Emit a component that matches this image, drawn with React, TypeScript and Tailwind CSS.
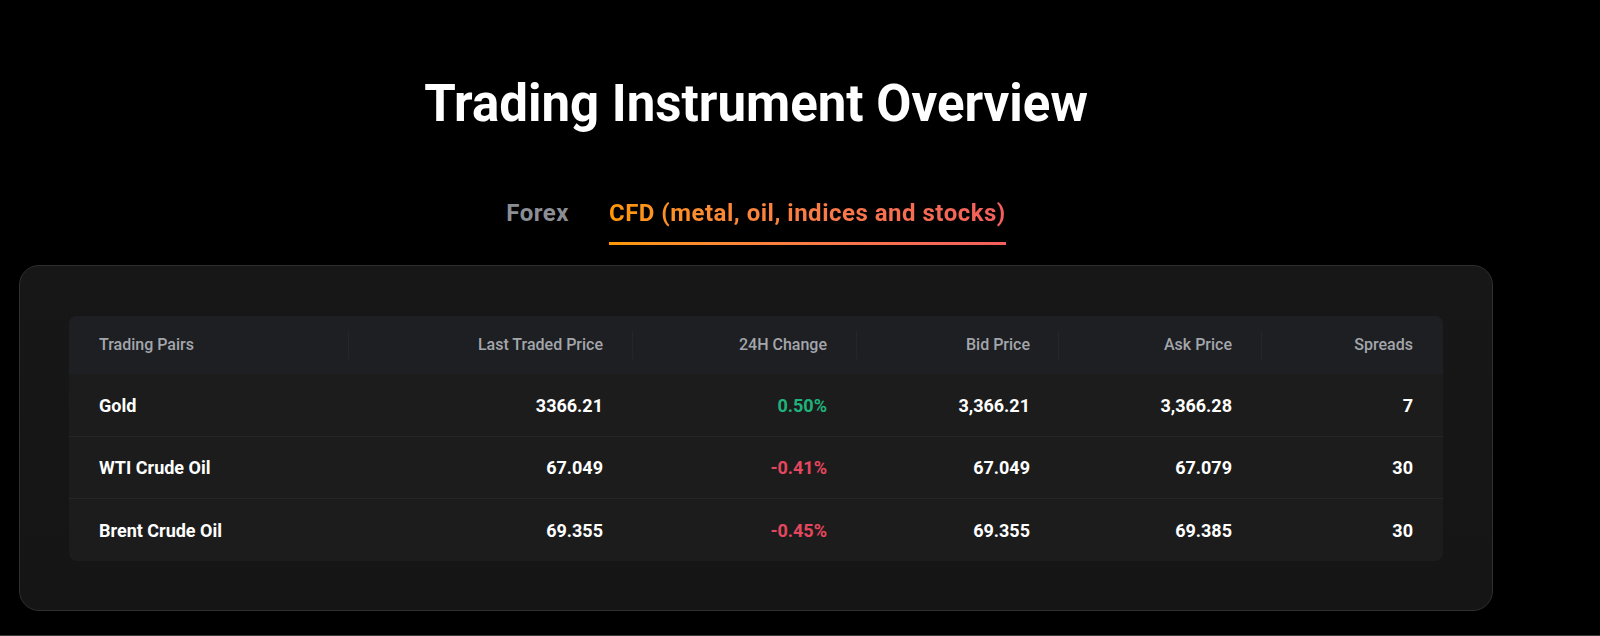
import React from "react";

const cols = [
  { w: "w-[280px]", pad: "pl-[30px] justify-start", divider: true },
  { w: "w-[284px]", pad: "pr-[30px] justify-end", divider: true },
  { w: "w-[224px]", pad: "pr-[30px] justify-end", divider: true },
  { w: "w-[202px]", pad: "pr-[29px] justify-end", divider: true },
  { w: "w-[203px]", pad: "pr-[30px] justify-end", divider: true },
  { w: "w-[181px]", pad: "pr-[30px] justify-end", divider: false },
];

const headers = ["Trading Pairs", "Last Traded Price", "24H Change", "Bid Price", "Ask Price", "Spreads"];

const rows = [
  { name: "Gold", last: "3366.21", change: "0.50%", up: true, bid: "3,366.21", ask: "3,366.28", spread: "7" },
  { name: "WTI Crude Oil", last: "67.049", change: "-0.41%", up: false, bid: "67.049", ask: "67.079", spread: "30" },
  { name: "Brent Crude Oil", last: "69.355", change: "-0.45%", up: false, bid: "69.355", ask: "69.385", spread: "30" },
];

export default function App() {
  const font = { fontFamily: 'Roboto, "Noto Sans", Arial, sans-serif' };
  return (
    <div className="w-full h-[636px] bg-black border-b border-[#3a3a3a] overflow-hidden" style={font}>
      <div className="w-[1512px] flex flex-col items-center">
        <h1 className="mt-[75px] text-[51px] leading-[58px] font-bold text-white">
          Trading Instrument Overview
        </h1>
        <div className="mt-[65px] flex items-start gap-[40px]">
          <div className="text-[24px] leading-[30px] font-bold tracking-[0.5px] text-[#8b8e94]">Forex</div>
          <div className="flex flex-col">
            <div className="text-[24px] leading-[30px] font-bold tracking-[0.5px] bg-gradient-to-r from-[#ff9800] to-[#f45d5d] bg-clip-text text-transparent">
              CFD (metal, oil, indices and stocks)
            </div>
            <div className="mt-[14px] h-[3px] w-full bg-gradient-to-r from-[#ff9800] to-[#f45d5d]" />
          </div>
        </div>
        <div className="mt-[20px] w-[1474px] rounded-[20px] border border-[#2f2f2f] bg-gradient-to-b from-[#171717] to-[#151515] px-[49px] pt-[50px] pb-[49px]">
          <div className="w-[1374px] rounded-[8px] overflow-hidden bg-[#1c1c1c]">
            <div className="flex h-[58px] bg-[#1e1f23]">
              {headers.map((h, i) => (
                <div key={h} className={`relative flex items-center ${cols[i].w} ${cols[i].pad}`}>
                  <span className="text-[16px] font-medium text-[#a3a6ab]">{h}</span>
                  {cols[i].divider && (
                    <div className="absolute right-0 top-[15px] h-[28px] w-px bg-[#25262a]" />
                  )}
                </div>
              ))}
            </div>
            {rows.map((r, ri) => {
              const vals = [r.name, r.last, r.change, r.bid, r.ask, r.spread];
              return (
                <div
                  key={r.name}
                  className={`flex ${ri === 0 ? "h-[62px]" : ri === 2 ? "h-[63px] border-t border-[#262628]" : "h-[62px] border-t border-[#262628]"}`}
                >
                  {vals.map((v, i) => (
                    <div key={i} className={`flex items-center ${cols[i].w} ${cols[i].pad}`}>
                      <span
                        className={`text-[18px] font-bold ${
                          i === 2 ? (r.up ? "text-[#1fb37b]" : "text-[#e5475f]") : "text-white"
                        }`}
                      >
                        {v}
                      </span>
                    </div>
                  ))}
                </div>
              );
            })}
          </div>
        </div>
      </div>
    </div>
  );
}
